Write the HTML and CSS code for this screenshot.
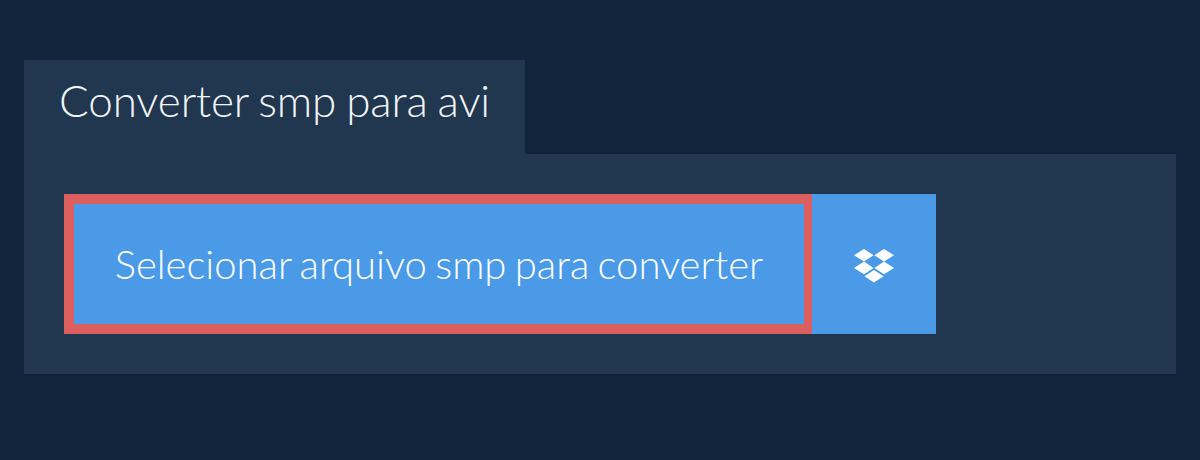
FILE: index.html
```html
<!DOCTYPE html>
<html>
  <head>
    <meta charset="utf-8">
    <title>Converter smp para avi</title>
    <link rel="stylesheet" href="styles.css">
  </head>
<body>
  <h1 class="tab">Converter smp para avi</h1>
  <div class="panel">
    <a class="pick" href="#">Selecionar arquivo smp para converter</a>
    <a class="drop" href="#">
      <svg class="dropIcon" viewBox="0 0 40 34" width="40" height="34">
        <path fill="#fff" d="M10 0 0 6.300 10 12.600 19.600 6.300zM30 0 20.400 6.300 30 12.600 40 6.300zM10 12.600 0 18.900 10 25.200 19.600 18.900zM30 12.600 20.400 18.900 30 25.200 40 18.900zM20 21 10.400 27.300 20 33.600 29.600 27.300z"/>
      </svg>
    </a>
  </div>
</body>
</html>
```

FILE: styles.css
```css
html
{
  background-color: #10253a;
}
body
{
  margin: 0;
  padding: 60px 24px 0;
  font-family: "Lato", "Liberation Sans", sans-serif;
  color: white;
}
.tab
{
  width: 501px;
  height: 94px;
  box-sizing: border-box;
  margin: 0;
  padding: 0 0 0 35px;
  background-color: #21364f;
  font-size: 44px;
  font-weight: 300;
  line-height: 80px;
  word-spacing: -2px;
  letter-spacing: -0.1px;
  color: #f2f5f7;
}
.panel
{
  display: flex;
  padding: 40px;
  background-color: #21364f;
}
.pick
{
  display: flex;
  align-items: center;
  justify-content: center;
  width: 748px;
  height: 140px;
  box-sizing: border-box;
  padding-bottom: 1px;
  border: 10px solid #dd5e5e;
  border-right-width: 8px;
  background-color: #4a9ae8;
  color: white;
  font-size: 40px;
  font-weight: 300;
  word-spacing: -2.500px;
  text-decoration: none;
}
.drop
{
  display: flex;
  align-items: center;
  justify-content: center;
  width: 124px;
  height: 140px;
  box-sizing: border-box;
  padding-top: 4px;
  background-color: #4a9ae8;
}
```
